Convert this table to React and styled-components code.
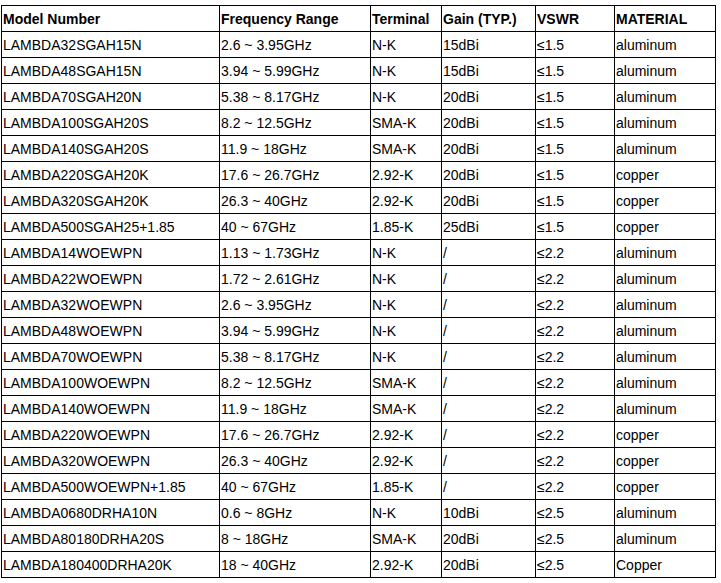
import React from 'react';
import styled, { createGlobalStyle } from 'styled-components';

const GlobalStyle = createGlobalStyle`
    body {
        margin: 0;
        background: #ffffff;
        font-family: "Liberation Sans", Arial, sans-serif;
    }
`;

const Page = styled.div`
    padding: 5px 0 0 1px;
`;

const Table = styled.table`
    border-collapse: collapse;
    table-layout: fixed;
    width: 714px;
    font-size: 14px;
    color: #000;
`;

const Cell = styled.td`
    border: 1px solid #000;
    height: 25px;
    padding: 0 1px 0 1px;
    white-space: nowrap;
    overflow: hidden;
    vertical-align: middle;
    text-align: left;
    font-weight: ${props => (props.head ? 700 : 400)};
`;

const columns = [218, 151, 71, 94, 79, 101];

const headers = ['Model Number', 'Frequency Range', 'Terminal', 'Gain (TYP.)', 'VSWR', 'MATERIAL'];

const rows = [
    ['LAMBDA32SGAH15N', '2.6 ~ 3.95GHz', 'N-K', '15dBi', '≤1.5', 'aluminum'],
    ['LAMBDA48SGAH15N', '3.94 ~ 5.99GHz', 'N-K', '15dBi', '≤1.5', 'aluminum'],
    ['LAMBDA70SGAH20N', '5.38 ~ 8.17GHz', 'N-K', '20dBi', '≤1.5', 'aluminum'],
    ['LAMBDA100SGAH20S', '8.2 ~ 12.5GHz', 'SMA-K', '20dBi', '≤1.5', 'aluminum'],
    ['LAMBDA140SGAH20S', '11.9 ~ 18GHz', 'SMA-K', '20dBi', '≤1.5', 'aluminum'],
    ['LAMBDA220SGAH20K', '17.6 ~ 26.7GHz', '2.92-K', '20dBi', '≤1.5', 'copper'],
    ['LAMBDA320SGAH20K', '26.3 ~ 40GHz', '2.92-K', '20dBi', '≤1.5', 'copper'],
    ['LAMBDA500SGAH25+1.85', '40 ~ 67GHz', '1.85-K', '25dBi', '≤1.5', 'copper'],
    ['LAMBDA14WOEWPN', '1.13 ~ 1.73GHz', 'N-K', '/', '≤2.2', 'aluminum'],
    ['LAMBDA22WOEWPN', '1.72 ~ 2.61GHz', 'N-K', '/', '≤2.2', 'aluminum'],
    ['LAMBDA32WOEWPN', '2.6 ~ 3.95GHz', 'N-K', '/', '≤2.2', 'aluminum'],
    ['LAMBDA48WOEWPN', '3.94 ~ 5.99GHz', 'N-K', '/', '≤2.2', 'aluminum'],
    ['LAMBDA70WOEWPN', '5.38 ~ 8.17GHz', 'N-K', '/', '≤2.2', 'aluminum'],
    ['LAMBDA100WOEWPN', '8.2 ~ 12.5GHz', 'SMA-K', '/', '≤2.2', 'aluminum'],
    ['LAMBDA140WOEWPN', '11.9 ~ 18GHz', 'SMA-K', '/', '≤2.2', 'aluminum'],
    ['LAMBDA220WOEWPN', '17.6 ~ 26.7GHz', '2.92-K', '/', '≤2.2', 'copper'],
    ['LAMBDA320WOEWPN', '26.3 ~ 40GHz', '2.92-K', '/', '≤2.2', 'copper'],
    ['LAMBDA500WOEWPN+1.85', '40 ~ 67GHz', '1.85-K', '/', '≤2.2', 'copper'],
    ['LAMBDA0680DRHA10N', '0.6 ~ 8GHz', 'N-K', '10dBi', '≤2.5', 'aluminum'],
    ['LAMBDA80180DRHA20S', '8 ~ 18GHz', 'SMA-K', '20dBi', '≤2.5', 'aluminum'],
    ['LAMBDA180400DRHA20K', '18 ~ 40GHz', '2.92-K', '20dBi', '≤2.5', 'Copper'],
];

const App = () => {
    return (
        <Page>
            <GlobalStyle />
            <Table>
                <colgroup>
                    { columns.map((w, i) => <col key={i} style={{ width: w }} />) }
                </colgroup>
                <thead>
                    <tr>
                        { headers.map(h => <Cell as="th" head key={h}>{ h }</Cell>) }
                    </tr>
                </thead>
                <tbody>
                    { rows.map((row, r) => (
                        <tr key={r}>
                            { row.map((v, c) => <Cell key={c}>{ v }</Cell>) }
                        </tr>
                    )) }
                </tbody>
            </Table>
        </Page>
    );
};

export default App;
